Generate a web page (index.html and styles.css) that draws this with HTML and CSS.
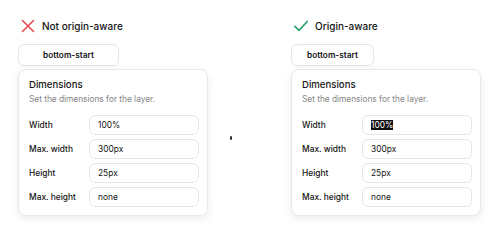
FILE: index.html
```html
<!DOCTYPE html>
<html lang="en">
<head>
    <meta charset="UTF-8">
    <meta name="viewport" content="width=device-width, initial-scale=1.0">
    <title>Origin-aware</title>
    <link rel="stylesheet" href="styles.css">
</head>
<body>
    <div class="compare">
        <section class="column">
            <div class="heading">
                <svg class="mark" width="14" height="14" viewBox="0 0 14 14">
                    <path d="M1.5 1.5 L12.5 12.5 M12.5 1.5 L1.5 12.5" stroke="#e5484d" stroke-width="1.5" fill="none" stroke-linecap="round"/>
                </svg>
                <span>Not origin-aware</span>
            </div>
            <div class="trigger trigger-wide">bottom-start</div>
            <div class="card">
                <div class="card-title">Dimensions</div>
                <div class="card-desc">Set the dimensions for the layer.</div>
                <div class="fields">
                    <label>Width</label><div class="field">100%</div>
                    <label>Max. width</label><div class="field">300px</div>
                    <label>Height</label><div class="field">25px</div>
                    <label>Max. height</label><div class="field">none</div>
                </div>
            </div>
        </section>
        <section class="column">
            <div class="heading">
                <svg class="mark" width="14" height="14" viewBox="0 0 14 14">
                    <path d="M0.8 7.4 L5 11.4 L13.4 2.4" stroke="#30a46c" stroke-width="1.6" fill="none" stroke-linecap="round" stroke-linejoin="round"/>
                </svg>
                <span>Origin-aware</span>
            </div>
            <div class="trigger">bottom-start</div>
            <div class="card">
                <div class="card-title">Dimensions</div>
                <div class="card-desc">Set the dimensions for the layer.</div>
                <div class="fields">
                    <label>Width</label><div class="field"><span class="selected">100%</span></div>
                    <label>Max. width</label><div class="field">300px</div>
                    <label>Height</label><div class="field">25px</div>
                    <label>Max. height</label><div class="field">none</div>
                </div>
            </div>
        </section>
    </div>
    <div class="pointer"></div>
</body>
</html>
```

FILE: styles.css
```css
body {
    margin: 0;
    background: #fff;
    font-family: Inter, "Noto Sans", sans-serif;
    color: #141414;
    position: relative;
    height: 240px;
    overflow: hidden;
}
.compare {
    display: grid;
    grid-template-columns: 190px 190px;
    column-gap: 83px;
    padding: 19px 0 0 18px;
}
.heading {
    display: flex;
    align-items: center;
    gap: 7px;
    padding-left: 3px;
    height: 14px;
    font-size: 10px;
    font-weight: 500;
}
.mark {
    flex: none;
}
.trigger {
    margin-top: 11px;
    width: 81px;
    height: 20px;
    line-height: 20px;
    border: 1px solid #e6e6e6;
    border-radius: 6px;
    text-align: center;
    font-size: 8.3px;
    font-weight: 600;
    box-shadow: 0 1px 2px rgba(0, 0, 0, 0.04);
}
.trigger-wide {
    width: 99px;
}
.card {
    margin-top: 3px;
    border: 1px solid #e8e8e8;
    border-radius: 8px;
    padding: 9px 9px 8px 10px;
    box-shadow: 0 3px 8px rgba(0, 0, 0, 0.08);
}
.card-title {
    font-size: 9.6px;
    font-weight: 500;
    line-height: 12px;
}
.card-desc {
    margin-top: 2px;
    font-size: 8.3px;
    line-height: 12px;
    color: #858585;
}
.fields {
    display: grid;
    grid-template-columns: 60px 110px;
    grid-auto-rows: 20px;
    row-gap: 4px;
    margin-top: 10px;
    align-items: center;
    font-size: 8.4px;
    font-weight: 500;
}
.field {
    height: 18px;
    line-height: 18px;
    border: 1px solid #e6e6e6;
    border-radius: 6px;
    padding: 0 8px;
    font-weight: 400;
}
.selected {
    background: #111;
    color: #fff;
}
.pointer {
    position: absolute;
    left: 230px;
    top: 136px;
    width: 2px;
    height: 4px;
    background: #333;
    border-radius: 1px;
}
```
